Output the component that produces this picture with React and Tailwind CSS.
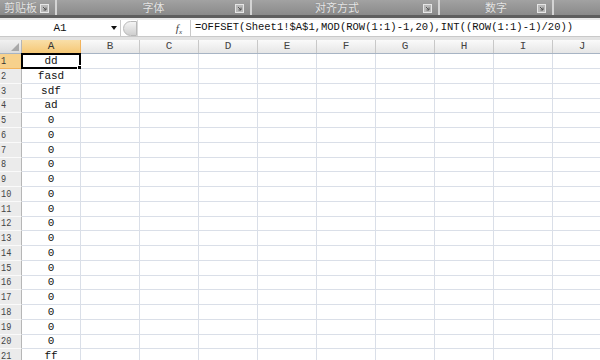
import React from 'react';

const cols = ['A', 'B', 'C', 'D', 'E', 'F', 'G', 'H', 'I', 'J'];
const vals = ['dd', 'fasd', 'sdf', 'ad', ...Array(16).fill('0'), 'ff'];

function Launcher() {
  return (
    <svg width="9" height="9" viewBox="0 0 9 9" className="shrink-0">
      <rect x="0.5" y="0.5" width="8" height="8" fill="#b8b8b8" stroke="#e6e6e6" />
      <path d="M3 3 L6 6 M6 3.5 V6 H3.5" stroke="#555" strokeWidth="1" fill="none" />
    </svg>
  );
}

function Group({ label, w, labelClass = 'justify-center', last }) {
  return (
    <div className={`relative flex h-full items-center ${w} shrink-0 border-r-2 border-[#d4d4d4]`}>
      <div className={`flex flex-1 ${labelClass}`}>
        <span className="text-[11px] leading-none text-[#e6e6e6] [text-shadow:0_0_1px_#777]">{label}</span>
      </div>
      {!last && <div className="absolute right-[6px] top-[4px]"><Launcher /></div>}
    </div>
  );
}

export default function App() {
  const mono = { fontFamily: '"Liberation Mono", "Noto Sans CJK SC", monospace' };
  return (
    <div className="h-[360px] w-[600px] overflow-hidden bg-white" style={{ fontFamily: '"Noto Sans CJK SC", sans-serif' }}>
      {/* Ribbon group labels */}
      <div className="flex h-[15px] bg-gradient-to-b from-[#a2a2a2] to-[#8a8a8a]">
        <Group label="剪贴板" w="w-[57px]" labelClass="justify-start pl-[4px]" />
        <Group label="字体" w="w-[195px]" />
        <Group label="对齐方式" w="w-[188px]" labelClass="justify-start pl-[63px]" />
        <Group label="数字" w="w-[114px]" />
        <div className="flex-1" />
      </div>
      <div className="h-[3px] bg-[#5e5e5e]" />
      <div className="h-[2px] bg-[#e9e9e9]" />
      {/* Formula bar */}
      <div className="flex h-[17px] items-stretch bg-white border-b border-[#c9c9c9]" style={mono}>
        <div className="relative flex w-[121px] items-center justify-center border-r border-[#c9c9c9]">
          <span className="text-[11px] text-[#111]">A1</span>
          <span className="absolute right-[3px] top-[6px] h-0 w-0 border-x-[3px] border-t-[4px] border-x-transparent border-t-[#111]" />
        </div>
        <div className="flex w-[70px] items-center border-r border-[#c9c9c9]">
          <div className="ml-[2px] h-[15px] w-[14px] rounded-l-full border border-[#b8b8b8] bg-gradient-to-b from-[#f4f4f4] to-[#cfcfcf]" />
          <div className="h-full w-px bg-[#d8d8d8]" />
          <div className="flex-1" />
          <span className="mr-[8px] text-[11px] italic text-[#444]" style={{ fontFamily: '"Liberation Serif", serif' }}>f<sub className="text-[7px]">x</sub></span>
        </div>
        <div className="flex flex-1 items-center pl-[4px] text-[10.5px] whitespace-nowrap text-[#111]">
          =OFFSET(Sheet1!$A$1,MOD(ROW(1:1)-1,20),INT((ROW(1:1)-1)/20))
        </div>
      </div>
      <div className="h-[3px] bg-[#e3e3e3]" />
      {/* Column headers */}
      <div className="flex h-[14px] border-b border-[#a7b4c4]" style={mono}>
        <div className="relative w-[22px] shrink-0 border-r border-[#b6b6b6] bg-gradient-to-b from-[#f1f1f1] to-[#dcdcdc]">
          <span className="absolute bottom-[2px] right-[2px] h-0 w-0 border-b-[8px] border-l-[8px] border-b-[#a9a9a9] border-l-transparent" />
        </div>
        {cols.map((c, i) => (
          <div
            key={c}
            className={`flex w-[59px] shrink-0 items-center justify-center border-r text-[11px] ${
              i === 0
                ? 'border-[#f2b35c] bg-gradient-to-b from-[#f9dfa8] to-[#f5c774] text-[#333]'
                : 'border-[#c8c8c8] bg-gradient-to-b from-[#fafafa] to-[#e6e6e6] text-[#444]'
            }`}
          >
            {c}
          </div>
        ))}
      </div>
      {/* Rows */}
      {vals.map((v, r) => (
        <div key={r} className={`flex shrink-0 ${r % 4 === 3 ? 'h-[14px]' : 'h-[15px]'}`} style={mono}>
          <div
            className={`flex w-[22px] shrink-0 items-center pl-[1px] border-r border-b text-[11px] ${
              r === 0
                ? 'border-[#f2b35c] bg-[#f7d18c] text-[#333]'
                : 'border-r-[#b6b6b6] border-b-[#fafafa] bg-[#ebebeb] text-[#444]'
            }`}
          >
            <span className="inline-block origin-left scale-x-[0.78]">{r + 1}</span>
          </div>
          {cols.map((c, i) => (
            <div key={c} className="relative flex w-[59px] shrink-0 items-center justify-center border-r border-b border-[#dadfe8] text-[11px] text-[#111]">
              {i === 0 ? v : ''}
              {i === 0 && r === 0 && (
                <div className="pointer-events-none absolute -left-[1px] -top-[1px] h-[16px] w-[60px] border-2 border-black">
                  <span className="absolute -bottom-[3px] -right-[3px] h-[5px] w-[5px] border border-white bg-black" />
                </div>
              )}
            </div>
          ))}
        </div>
      ))}
    </div>
  );
}
